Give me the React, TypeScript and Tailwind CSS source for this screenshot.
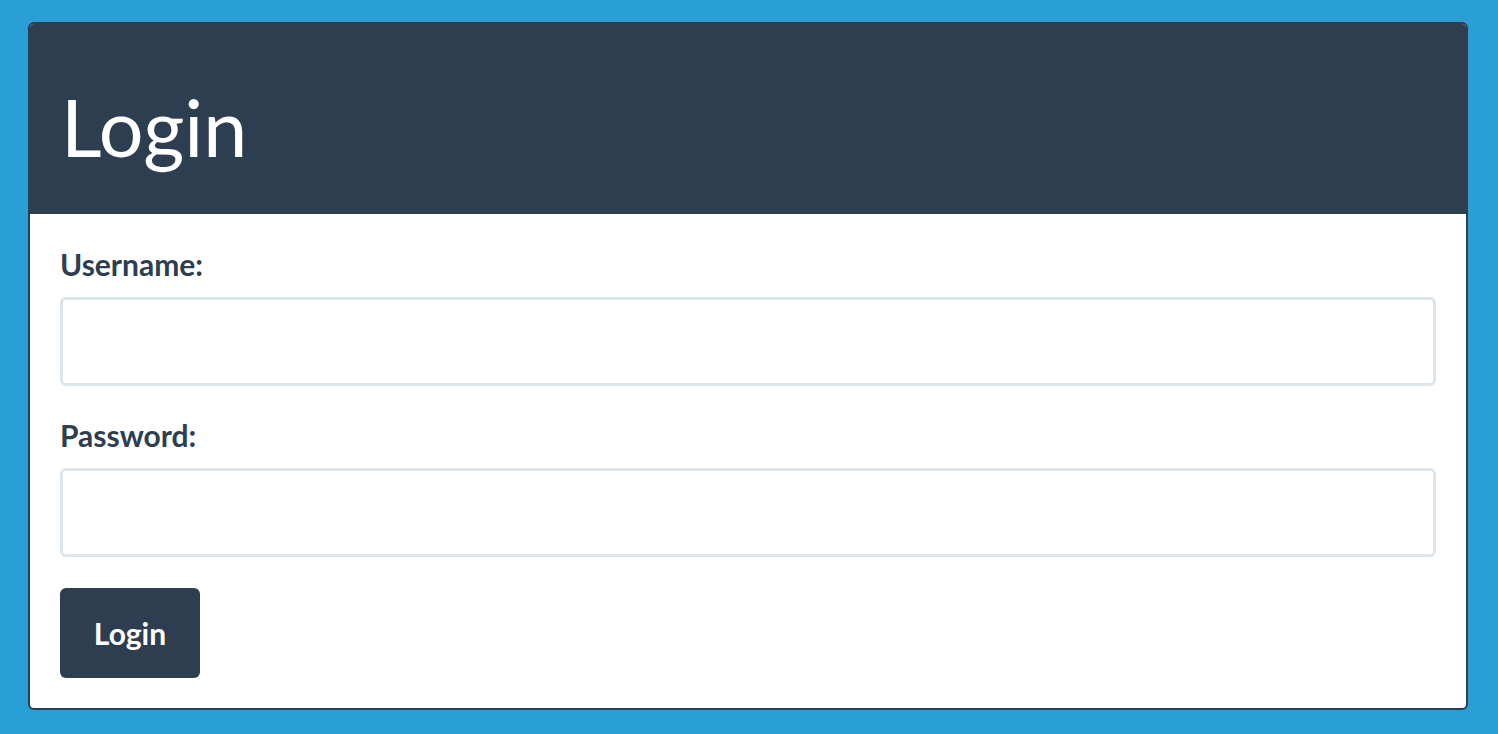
import React from 'react';

// Login card on a blue page

const Field: React.FC<{ id: string; label: string; type?: string; className?: string }> = ({
  id,
  label,
  type = 'text',
  className = '',
}) => (
  <div className={className}>
    <label htmlFor={id} className="block text-[30px] leading-[45px] font-bold text-[#2c3e50]">
      {label}
    </label>
    <input
      id={id}
      type={type}
      className="mt-[10px] block w-full h-[89px] rounded-[6px] border-[3px] border-[#dce4ec] bg-white px-4 text-[28px] text-[#2c3e50] outline-none"
    />
  </div>
);

export default function App() {
  return (
    <div
      className="min-h-[734px] bg-[#2a9fd6] pt-[22px] pl-[28px] pr-[30px] pb-[24px]"
      style={{ fontFamily: 'Lato, "Open Sans", sans-serif' }}
    >
      <div className="w-[1440px] rounded-[6px] border-2 border-[#2c3e50] bg-white overflow-hidden">
        <div className="h-[190px] bg-[#2e3e51] flex items-center px-[31px]">
          <h1 className="text-[79px] leading-none font-normal text-white pt-[14px]">Login</h1>
        </div>
        <form className="px-[30px] pt-[28px] pb-[30px]" onSubmit={(e) => e.preventDefault()}>
          <Field id="username" label="Username:" />
          <Field id="password" label="Password:" type="password" className="mt-[27px]" />
          <button
            type="submit"
            className="mt-[31px] w-[140px] h-[90px] rounded-[6px] bg-[#2e3e51] text-white text-[30px] font-bold"
          >
            Login
          </button>
        </form>
      </div>
    </div>
  );
}
